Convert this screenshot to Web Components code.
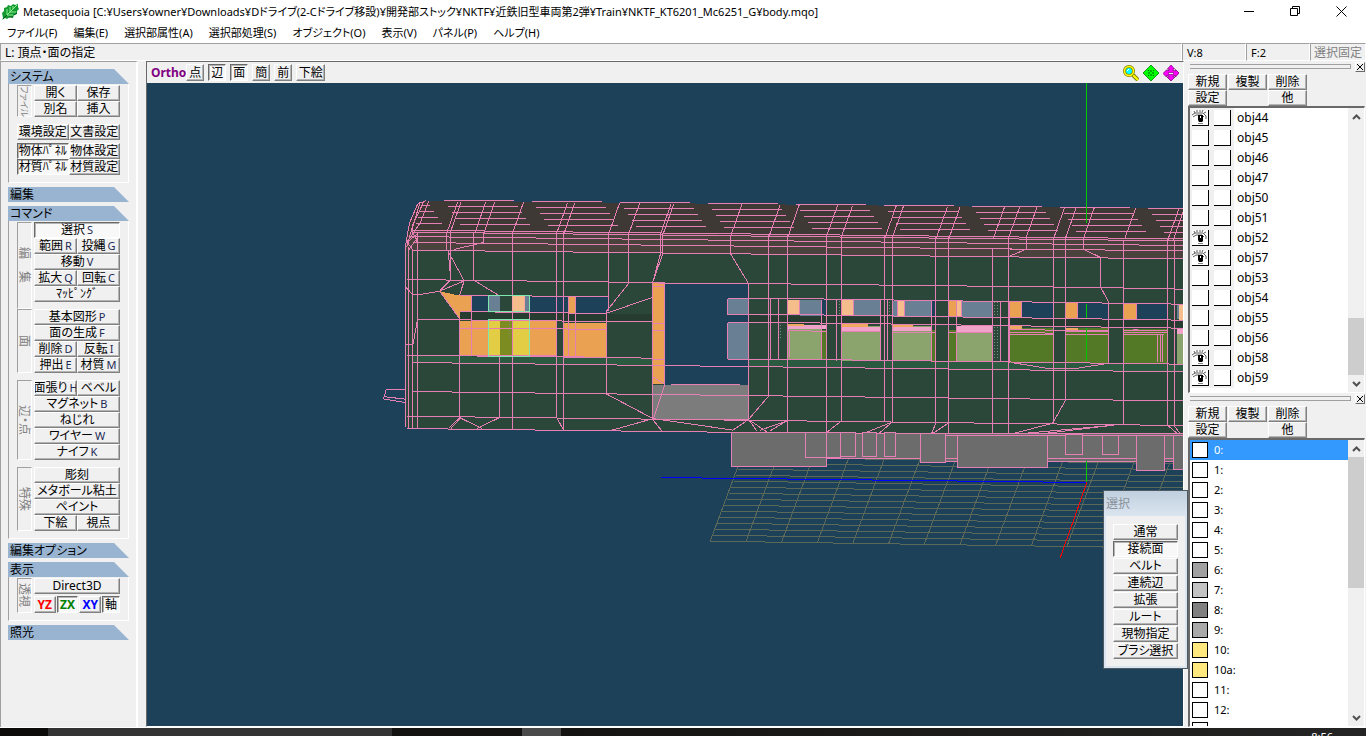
<!DOCTYPE html>
<html lang="ja">
<head>
<meta charset="utf-8">
<title>Metasequoia</title>
<style>
	html, body {
		margin: 0;
		height: 100%;
	}
	body {
		font: 12px/16px "Noto Sans", "Noto Sans CJK JP", sans-serif;
		color: #000;
		background: #f0f0f0;
		overflow: hidden;
	}
</style>
</head>
<body>
<meta-app></meta-app>

<script>
const base = `
	* { box-sizing: border-box; }
	button {
		font: inherit;
		color: inherit;
		margin: 0;
		padding: 0;
		border: 0;
		background: none;
		white-space: nowrap;
	}
`;

class MetaButton extends HTMLElement {
	connectedCallback() {
		this.attachShadow({ mode: "open" });
		this.shadowRoot.innerHTML = `
		<style>
			${base}
			:host {
				display: block;
				flex: 1 1 0;
				min-width: 0;
				height: 16px;
				font-feature-settings: "palt";
			}
			button {
				display: flex;
				align-items: center;
				justify-content: center;
				gap: 2px;
				width: 100%;
				height: 100%;
				line-height: 14px;
				overflow: hidden;
				background: #f0f0f0;
				border: 1px solid;
				border-color: #fff #808080 #808080 #fff;
				box-shadow: inset -1px -1px #b4b4b4;
			}
			:host([pressed]) button {
				background: #f8f8f8;
				border-color: #696969 #fff #fff #696969;
				box-shadow: inset 1px 1px #b4b4b4;
			}
			.key { font-size: 11px; color: #1c2a55; }
		</style>
		<button type="button" aria-pressed="${this.hasAttribute("pressed")}"><slot></slot>${this.hasAttribute("key") ? `<span class="key">${this.getAttribute("key")}</span>` : ""}</button>
		`;
	}
}

class TitleBar extends HTMLElement {
	connectedCallback() {
		this.attachShadow({ mode: "open" });
		this.shadowRoot.innerHTML = `
		<style>
			${base}
			:host {
				display: flex;
				align-items: center;
				height: 23px;
				padding-right: 2px;
				background: #fff;
				font-size: 11px;
				font-feature-settings: "palt";
			}
			.leaf { width: 18px; height: 18px; margin: 0 3px 0 2px; }
			h1 { flex: 1; margin: 0; font: inherit; white-space: nowrap; }
			button { width: 46px; height: 22px; display: grid; place-items: center; }
			button svg { width: 11px; height: 11px; fill: none; stroke: #000; }
		</style>
		<svg class="leaf" viewBox="0 0 18 18">
			<path d="M1 15 0 10l2-2V5l3-1 1-2 3 1 2-2 2 1 3-1v3l1 2-2 2v3l-3 1-1 3-3-1-3 2-2-1-3 2z" fill="#149a32"/>
			<path d="M1 16 15 2M5 12V6m3 3V4m3 2V3M5 12h6M8 9h6" stroke="#8cf08c" fill="none"/>
			<path d="M1 16 5 12M7 14l4 0M12 12l3-2" stroke="#06531a" fill="none"/>
		</svg>
		<h1><slot></slot></h1>
		<button type="button" aria-label="最小化"><svg viewBox="0 0 11 11"><path d="M0 5.5h10"/></svg></button>
		<button type="button" aria-label="元に戻す"><svg viewBox="0 0 11 11"><path d="M.5 2.5h7v7h-7zM2.500 2.500v-2h7v7h-2"/></svg></button>
		<button type="button" aria-label="閉じる"><svg viewBox="0 0 11 11"><path d="m.5.5 10 10m0-10-10 10"/></svg></button>
		`;
	}
}

class MenuBar extends HTMLElement {
	connectedCallback() {
		const items = ["ファイル(F)", "編集(E)", "選択部属性(A)", "選択部処理(S)", "オブジェクト(O)", "表示(V)", "パネル(P)", "ヘルプ(H)"];
		this.attachShadow({ mode: "open" });
		this.shadowRoot.innerHTML = `
		<style>
			${base}
			:host { display: block; height: 20px; background: #fff; font-size: 11px; font-feature-settings: "palt"; }
			nav { display: flex; gap: 16px; padding-left: 7px; }
			button { height: 20px; }
		</style>
		<nav>${items.map(i => `<button type="button">${i}</button>`).join("")}</nav>
		`;
	}
}

class StatusBar extends HTMLElement {
	connectedCallback() {
		this.attachShadow({ mode: "open" });
		this.shadowRoot.innerHTML = `
		<style>
			${base}
			:host { display: flex; height: 18px; line-height: 17px; background: #f0f0f0; }
			span { border: 1px solid; border-color: #a0a0a0 #fff #fff #a0a0a0; padding-left: 4px; width: 64px; font-size: 11px; white-space: nowrap; overflow: hidden; }
			.hint { flex: 1; font-size: 12px; font-feature-settings: "palt"; }
			.lock { width: 56px; padding-left: 3px; font-size: 12px; color: #808080; }
		</style>
		<span class="hint">L: 頂点・面の指定</span><span>V:8</span><span>F:2</span><span class="lock">選択固定</span>
		`;
	}
}

class ToolGroup extends HTMLElement {
	connectedCallback() {
		this.attachShadow({ mode: "open" });
		this.shadowRoot.innerHTML = `
		<style>
			${base}
			:host { display: block; }
			h2 {
				margin: 0;
				padding-left: 2px;
				height: 15px;
				font: inherit;
				line-height: 15px;
				font-feature-settings: "palt";
				background: #99b4d1;
				clip-path: polygon(0 0, calc(100% - 15px) 0, 100% 100%, 0 100%);
			}
			.body {
				display: flex;
				flex-direction: column;
				gap: 7px;
				padding: 1px 8px 7px;
				border: 1px solid;
				border-width: 0 1px 1px;
				border-color: #a0a0a0 #fff #fff #a0a0a0;
			}
			:host([closed]) .body { display: none; }
		</style>
		<h2>${this.getAttribute("heading")}</h2>
		<div class="body"><slot></slot></div>
		`;
	}
}

class ToolSection extends HTMLElement {
	connectedCallback() {
		const side = this.getAttribute("side");
		this.attachShadow({ mode: "open" });
		this.shadowRoot.innerHTML = `
		<style>
			${base}
			:host { display: flex; gap: 2px; }
			.side {
				contain: size;
				width: 15px;
				border: 1px solid;
				border-color: #a0a0a0 #fff #fff #a0a0a0;
				writing-mode: vertical-rl;
				text-orientation: sideways;
				text-align: center;
				line-height: 13px;
				white-space: nowrap;
				color: #808080;
				font-feature-settings: "palt";
			}
			:host([small]) .side { font-size: 9px; }
			.rows { flex: 1; min-width: 0; }
		</style>
		${side ? `<div class="side">${side}</div>` : ""}
		<div class="rows"><slot></slot></div>
		`;
	}
}

class ToolRow extends HTMLElement {
	connectedCallback() {
		this.attachShadow({ mode: "open" });
		this.shadowRoot.innerHTML = `<style>:host { display: flex; }</style><slot></slot>`;
	}
}

class ToolPanel extends HTMLElement {
	connectedCallback() {
		this.attachShadow({ mode: "open" });
		this.shadowRoot.innerHTML = `
		<style>
			${base}
			:host {
				display: flex;
				flex-direction: column;
				gap: 4px;
				padding: 7px 7px 0;
				border-top: 1px solid #a0a0a0;
				border-left: 1px solid #a0a0a0;
				border-right: 2px solid #fff;
				overflow: hidden;
			}
			.close-up { margin-top: -4px; }
			.edit { height: 87px; margin-bottom: -7px; }
			.axis { gap: 1px; margin-top: 2px; font-weight: 700; }
			.axis meta-button { height: 17px; }
			.yz { color: #f00; } .zx { color: #008000; } .xy { color: #00f; }
			.ax { font-weight: 400; flex: 0 0 18px; }
		</style>
		<tool-group heading="システム">
			<tool-section side="ファイル" small>
				<tool-row><meta-button>開く</meta-button><meta-button>保存</meta-button></tool-row>
				<tool-row><meta-button>別名</meta-button><meta-button>挿入</meta-button></tool-row>
			</tool-section>
			<tool-section>
				<tool-row><meta-button>環境設定</meta-button><meta-button>文書設定</meta-button></tool-row>
			</tool-section>
			<tool-section class="close-up">
				<tool-row><meta-button pressed>物体ﾊﾟﾈﾙ</meta-button><meta-button>物体設定</meta-button></tool-row>
				<tool-row><meta-button pressed>材質ﾊﾟﾈﾙ</meta-button><meta-button>材質設定</meta-button></tool-row>
			</tool-section>
		</tool-group>
		<tool-group heading="編集" closed></tool-group>
		<tool-group heading="コマンド">
			<tool-section side="編　集" class="edit">
				<tool-row><meta-button pressed key="S">選択</meta-button></tool-row>
				<tool-row><meta-button key="R">範囲</meta-button><meta-button key="G">投縄</meta-button></tool-row>
				<tool-row><meta-button key="V">移動</meta-button></tool-row>
				<tool-row><meta-button key="Q">拡大</meta-button><meta-button key="C">回転</meta-button></tool-row>
				<tool-row><meta-button>ﾏｯﾋﾟﾝｸﾞ</meta-button></tool-row>
			</tool-section>
			<tool-section side="面">
				<tool-row><meta-button key="P">基本図形</meta-button></tool-row>
				<tool-row><meta-button key="F">面の生成</meta-button></tool-row>
				<tool-row><meta-button key="D">削除</meta-button><meta-button key="I">反転</meta-button></tool-row>
				<tool-row><meta-button key="E">押出</meta-button><meta-button key="M">材質</meta-button></tool-row>
			</tool-section>
			<tool-section side="辺・点">
				<tool-row><meta-button key="H">面張り</meta-button><meta-button>ベベル</meta-button></tool-row>
				<tool-row><meta-button key="B">マグネット</meta-button></tool-row>
				<tool-row><meta-button>ねじれ</meta-button></tool-row>
				<tool-row><meta-button key="W">ワイヤー</meta-button></tool-row>
				<tool-row><meta-button key="K">ナイフ</meta-button></tool-row>
			</tool-section>
			<tool-section side="特殊">
				<tool-row><meta-button>彫刻</meta-button></tool-row>
				<tool-row><meta-button>メタボール粘土</meta-button></tool-row>
				<tool-row><meta-button>ペイント</meta-button></tool-row>
				<tool-row><meta-button>下絵</meta-button><meta-button>視点</meta-button></tool-row>
			</tool-section>
		</tool-group>
		<tool-group heading="編集オプション" closed></tool-group>
		<tool-group heading="表示">
			<tool-section side="透視">
				<tool-row><meta-button>Direct3D</meta-button></tool-row>
				<tool-row class="axis"><meta-button class="yz">YZ</meta-button><meta-button class="zx" pressed>ZX</meta-button><meta-button class="xy">XY</meta-button><meta-button class="ax" pressed>軸</meta-button></tool-row>
			</tool-section>
		</tool-group>
		<tool-group heading="照光" closed></tool-group>
		`;
	}
}

class ModelView extends HTMLElement {
	constructor() {
		super();
		this.attachShadow({ mode: "open" });
		this.shadowRoot.innerHTML = `
		<style>
			:host { display: block; background: #1d4159; overflow: hidden; min-height: 0; }
			svg { display: block; width: 100%; height: 100%; shape-rendering: crispEdges; }
			path { vector-effect: non-scaling-stroke; stroke-width: 1px; }
			.w { fill: none; stroke: #e67fb4; }
			.grid { fill: none; stroke: #5c6858; }
			.bg { fill: #1d4159; } .or { fill: #eba152; } .pe { fill: #f5bd8b; }
			.sl { fill: #697f93; } .lt { fill: #8ba46e; } .dk { fill: #537926; }
			.un { fill: #6c6c6c; stroke: #e67fb4; }
		</style>
		${this.render()}
		`;
	}

	/* model units are a third of a pixel */
	render() {
		const line = (x1, y1, x2, y2) => `M${x1} ${y1}L${x2} ${y2}`;
		const rects = (cls, list) => `<path class="${cls}" d="${list.map(([x, y, w, h]) => `M${x} ${y}h${w}v${h}h${-w}z`).join("")}"/>`;

		let grid = "";
		for (let i = 0; i < 15; i++) grid += line(990 + i * 7, 1083 - i * 18, 2340 + i * 7, 1103 - i * 18);
		for (let i = 0; i < 14; i++) grid += line(990 + i * 107, 1083 + i * 1.6, 1084 + i * 107, 830 + i * 1.6);

		let slats = "M124 76H150M118 94H162M112 112H174M106 130H186";
		for (let g = 0; g < 9; g++) {
			for (let r = 0; r < 5; r++) {
				const x = 192 + g * 264 + r * 12;
				const y = 61 + g * 3 + r * 18;
				slats += `M${x} ${y}H${Math.min(x + 208, 2412)}`;
			}
		}

		const ribs = [233, 243, 317, 344, 430, 562, 584, 718, 778, 873, 881, 1085, 1200, 1257, 1372, 1417, 1548, 1570, 1702, 1740, 1873, 1918, 1970, 2053, 2088, 2142, 2266, 2396, 2412];
		const ribLines = ribs.map(x => line(x, 62 + x / 100, x - 33, 155 + x / 100)).join("");

		const rails = [[95, 150, 176], [95, 156, 182], [85, 169, 196], [97, 187, 212], [97, 210, 236], [97, 547, 575], [97, 634, 662], [80, 708, 736], [80, 745, 772]];
		const railLines = rails.map(r => line(r[0], r[1], 2412, r[2])).join("");

		const posts = [
			[76, 196, 740], [85, 200, 745], [97, 208, 745], [112, 155, 745], [200, 155, 212], [210, 155, 300], [281, 155, 300], [310, 155, 187],
			[398, 155, 747], [530, 155, 712], [550, 155, 750], [686, 160, 392], [745, 162, 310], [841, 162, 220], [848, 162, 220],
			[1052, 164, 222], [1105, 310, 718], [1165, 164, 648], [1171, 355, 538], [1195, 355, 538], [1222, 164, 756], [1340, 165, 756], [1384, 165, 722],
			[1369, 358, 542], [1501, 358, 542], [1514, 168, 725], [1522, 360, 543], [1537, 168, 725], [1655, 362, 543], [1667, 168, 728], [1705, 168, 762],
			[1837, 205, 765], [1861, 364, 546], [1885, 170, 765], [1938, 172, 207], [2021, 172, 660], [2056, 172, 660], [2109, 175, 207], [2162, 232, 322],
			[2185, 366, 550], [2230, 178, 733], [2362, 178, 735], [2383, 178, 740]
		].map(p => `M${p[0]} ${p[1]}V${p[2]}`).join("");

		return `
		<svg viewBox="147 83 1036 643" preserveAspectRatio="xMidYMid slice" role="img" aria-label="body.mqo">
		<g transform="translate(380.2 180.2) scale(.33333)">
			<path class="grid" d="${grid}"/>
			<path d="M843 892 2120 907" stroke="#00f"/>
			<path d="M130 61 2412 86V240H75V196L88 128 112 72z" fill="#3e3935"/>
			<path d="M90 153 2412 178V240H75V196z" fill="#4a423d"/>
			<path d="M75 209H97L2412 236V771L500 750 90 745 75 738z" fill="#2b4739"/>
			<path d="M97 527 2412 552V575L97 547z" fill="#2b5a40"/>
			<path d="M238 396 2412 420V442L238 420z" fill="#263c30"/>
			<path class="w" d="M75 628H18L10 656 75 667M10 649 75 657"/>
			${rects("bg", [[274, 347, 51, 47], [449, 349, 236, 48], [854, 310, 251, 303], [1325, 359, 15, 47], [1655, 363, 12, 47], [1925, 365, 96, 48], [2093, 368, 92, 47], [2270, 370, 92, 47]])}
			<path class="or" d="M178 333 232 345 274 347V394H238V415z"/>
			${rects("or", [[565, 350, 22, 47], [238, 421, 291, 106], [550, 428, 130, 104], [816, 308, 38, 304], [1705, 362, 24, 48], [1888, 364, 37, 48], [2056, 367, 37, 47], [2230, 368, 40, 47]])}
			${rects("sl", [[325, 347, 33, 47], [434, 347, 15, 47], [1042, 355, 63, 48], [1042, 427, 63, 109], [1258, 359, 67, 47], [1421, 359, 80, 47], [1537, 362, 118, 47], [1745, 363, 92, 48], [2389, 370, 8, 47]])}
			${rects("pe", [[397, 347, 37, 47], [1222, 358, 36, 47], [1384, 359, 37, 47], [1552, 363, 21, 47], [1729, 363, 16, 47], [2397, 371, 14, 47]])}
			${rects("lt", [[1222, 436, 103, 102], [1384, 436, 117, 105], [1537, 438, 118, 105], [1729, 438, 108, 106], [2389, 444, 23, 108]])}
			${rects("dk", [[1325, 448, 15, 92], [1655, 448, 12, 95], [1705, 448, 24, 96], [1888, 442, 133, 105], [2056, 444, 129, 105], [2230, 446, 132, 104]])}
			<path d="M325 420h124v107H325z" fill="#e3cd45"/>
			<path d="M358 420h40v107H358z" fill="#7d8c20"/>
			<path d="M818 613h287v105H818z" fill="#7c7c7c"/>
			<path d="M1222 434h118v12l-118 2zM1384 440h117v12h-117zM1537 440h118v13h-118zM1729 438h108v16h-108zM2389 446h23v14h-23z" fill="#f0a3c9"/>
			<path d="M1384 432h78v8h-78zM1537 434h60v6h-60zM1888 438h38v7h-38zM2056 442h38v6h-38zM1222 432h50v5h-50z" fill="#efa95f"/>
			<path class="w" d="${slats}${ribLines}${railLines}${posts}"/>
			<path class="w" d="M138 61 112 72 88 128 76 196M130 66 98 134 80 200M146 62 120 128 98 160 80 185 97 208M120 64 95 150 112 187M76 190 112 160M85 210 112 172"/>
			<path class="w" d="M80 298 816 307 854 310H1105L2162 322 2412 327M97 343H120L178 333 252 302 238 345M178 333 210 300M203 212 252 302M204 212 212 300M281 300 358 347M310 187 220 208M76 320 97 343"/>
			<path class="w" d="M238 345 686 350M238 394 680 400M178 333 238 415V712M112 418 238 419 686 424H816M112 418 98 495M76 493H97M80 526 530 529 816 534M238 445 530 446 680 448M550 424V532H680V392L745 310M682 398 816 352M274 347V527M449 349V527M358 527V712M680 532V642L818 715"/>
			<path class="w" d="M565 350H587V532M565 350V532M238 527H530M550 532H680"/>
			<path class="w" d="M841 220 818 305M848 220 820 300M816 308H854V612L818 590M816 308V718H1105M816 320H854M816 430H854M816 451H854M816 538H854M854 612 820 715M873 613H1080M1052 222 1105 310"/>
			<path class="w" d="M238 712 205 745M242 712 212 745M238 712 305 745M358 712 290 745M530 712 550 750M816 716 695 750M816 716 845 752M818 715 1060 750M1105 718 1055 752M1105 718 1165 648M1105 718 1130 752M1105 718 1160 755M1220 722 1140 750M1220 722 1170 752M1384 722 1340 756M1537 725 1460 756M1537 725 1498 758M1705 728 1655 762M1667 728 1655 758M2056 660 2018 728M2200 735 1905 762M2200 735 1950 765M2021 728 1900 760M2362 735 2400 768M2383 738 2405 768M2021 660V728"/>
			<path class="w" d="M1042 355H1235L2412 372M1042 403H1235L2412 420M1042 427H1222L2412 444M1042 537H1222L2412 552M1042 355V403M1042 427V537M1888 207 1938 207 2109 207 2162 232M1938 207 1888 228M2162 322 2185 365M1900 548 2010 566H2080L2180 550"/>
			<path class="w" d="M1222 450 1340 454M1228 450V530M1384 453H1501M1537 456H1667M1705 458H1837M1888 448 2185 452M1888 456 2021 459M1888 463H2021M2056 455H2185M2056 462H2185M2230 450H2360M2230 458H2362M2230 464H2350M2332 460V545M2340 460V545M2348 460V545M2258 449 2360 452M1258 358V405M1325 358V538M1421 358V405M1501 358V541M1552 362V410M1573 362V410M1729 362V544M1745 362V411M1888 364V547M1925 365V412M2056 367V549M2093 367V414M2230 369V550M2270 370V417"/>
			<path d="M325 347h124v47H325zM325 419h124v109H325z" fill="none" stroke="#7fe6b0"/>
			<path d="M397 347V394M434 347V394" stroke="#f5a7a6"/>
			<path d="M388 422V475M1202 435V475M1377 362V405M1527 365V405M1843 366V408M1853 366V408M1843 440V540M1853 440V540" stroke="#74917e" stroke-dasharray="1 2"/>
			${rects("un", [[1276, 760, 1136, 76], [1697, 765, 715, 78]])}
			<path d="M1280 768H2412V834H1280z" fill="#6c6c6c"/>
			${rects("un", [[1055, 756, 285, 104], [1276, 758, 105, 74], [1381, 757, 45, 72], [1447, 757, 43, 72], [1513, 757, 34, 72], [1622, 760, 75, 87], [1732, 765, 271, 97], [2056, 763, 52, 60], [2167, 766, 49, 57], [2270, 767, 84, 104], [2380, 767, 32, 101]])}
			<path d="M2120 -292V128M2120 370V413M2120 443V543M2120 843V907" stroke="#00c800"/>
			<path d="M2120 907 2040 1133" stroke="#f00"/>
		</g>
		</svg>`;
	}
}

class ViewPane extends HTMLElement {
	connectedCallback() {
		this.attachShadow({ mode: "open" });
		this.shadowRoot.innerHTML = `
		<style>
			${base}
			:host {
				display: grid;
				grid-template-rows: 21px 1fr;
				position: relative;
				min-width: 0;
				border: 1px solid;
				border-color: #696969 #fff #fff #696969;
			}
			.bar { display: flex; align-items: center; padding: 0 4px; background: #f0f0f0; }
			.bar b { color: #800080; }
			.bar meta-button { flex: 0 0 18px; height: 17px; margin-right: 4px; }
			.bar meta-button.wide { flex-basis: 29px; }
			.bar .spring { flex: 1; }
			.bar .nav { width: 16px; height: 16px; margin-left: 4px; }
			.nav svg { display: block; width: 16px; height: 16px; }
			select-dialog { position: absolute; right: -5px; bottom: 57px; z-index: 1; }
		</style>
		<div class="bar">
			<b>Ortho</b>
			<meta-button>点</meta-button><meta-button pressed>辺</meta-button><meta-button pressed>面</meta-button><meta-button>簡</meta-button><meta-button>前</meta-button><meta-button class="wide">下絵</meta-button>
			<span class="spring"></span>
			<button class="nav" type="button" aria-label="拡大縮小"><svg viewBox="0 0 16 16"><path d="m10 10 5 5" stroke="#808000" stroke-width="4"/><path d="m10 10 5 5" stroke="#ff0" stroke-width="2"/><circle cx="6" cy="6" r="4.500" fill="#0ff" stroke="#808000" stroke-width="3"/><circle cx="6" cy="6" r="4.500" fill="none" stroke="#ff0" stroke-width="1.500"/><path d="M4 6 6 4" stroke="#fff"/></svg></button>
			<button class="nav" type="button" aria-label="移動"><svg viewBox="0 0 16 16"><path d="M8 0 16 8 8 16 0 8z" fill="#0f0" stroke="#008000" stroke-width=".8"/><path d="M8 5v2M8 9v2M5 8h2M9 8h2M5 5.500h1M10 5.500h1M5 10.500h1M10 10.500h1" stroke="#006000"/></svg></button>
			<button class="nav" type="button" aria-label="回転"><svg viewBox="0 0 16 16"><path d="m8 0 3.500 4H10v1.500l2.500.5V4.500L16 8l-3.500 4v-1.500L10 11v1h2l-4 4-4-4h2v-1l-2.500-.5V12L0 8.500 3.500 5l2.500.5V4H4.500z" fill="#f0f" stroke="#800080" stroke-width=".8"/><path d="M5.500 7.500h5v2h-5z" fill="#f0f0f0" stroke="#800080" stroke-width=".7"/></svg></button>
		</div>
		<model-view></model-view>
		<select-dialog></select-dialog>
		`;
	}
}

class SelectDialog extends HTMLElement {
	connectedCallback() {
		const modes = ["通常", "接続面", "ベルト", "連続辺", "拡張", "ルート", "現物指定", "ブラシ選択"];
		this.attachShadow({ mode: "open" });
		this.shadowRoot.innerHTML = `
		<style>
			${base}
			:host {
				display: block;
				width: 85px;
				border: 1px solid #4f5a63;
				background: #f0f0f0;
				box-shadow: inset 0 0 0 2px #dbe5f0;
			}
			h2 { margin: 0; height: 25px; padding-left: 2px; font: inherit; line-height: 26px; color: #8a929b; background: linear-gradient(#c0cfde, #dbe5f0); }
			.modes { display: grid; gap: 1px; padding: 8px 9px 9px; }
		</style>
		<h2>選択</h2>
		<div class="modes">${modes.map((m, i) => `<meta-button${i === 1 ? " pressed" : ""}>${m}</meta-button>`).join("")}</div>
		`;
	}
}

class DockPanel extends HTMLElement {
	connectedCallback() {
		this.attachShadow({ mode: "open" });
		const top = Number(this.getAttribute("thumb-top"));
		const size = Number(this.getAttribute("thumb-size"));
		this.shadowRoot.innerHTML = `
		<style>
			${base}
			:host { display: grid; grid-template-rows: 11px 34px 1fr; min-height: 0; }
			.grip { display: flex; align-items: center; gap: 4px; padding: 0 1px 0 2px; }
			.grip i { flex: 1; height: 5px; border: 1px solid #a0a0a0; border-width: 1px 1px 1px 0; }
			.close { width: 10px; height: 10px; border: 1px solid; border-color: #fff #696969 #696969 #fff; display: grid; place-items: center; }
			.close svg { display: block; width: 6px; height: 6px; stroke: #000; fill: none; }
			.tools { display: grid; grid-template-columns: repeat(3, 39px); gap: 0 1px; align-content: start; padding-top: 2px; }
			.other { grid-column: 3; }
			.box { display: flex; border: 1px solid; border-color: #696969 #fff #fff #696969; border-width: 2px 1px 1px 2px; min-height: 0; background: #fff; margin-right: 1px; }
			.list { flex: 1; min-height: 0; overflow: hidden; }
			.scroll { display: grid; grid-template-rows: 17px 1fr 17px; width: 16px; background: #f0f0f0; }
			.scroll svg { width: 9px; height: 6px; margin: auto; fill: none; stroke: #505050; stroke-width: 2; }
			.track { display: grid; grid-template-rows: ${top}fr ${size}fr ${100 - top - size}fr; }
			.thumb { grid-row: 2; background: #cdcdcd; }
		</style>
		<div class="grip"><i></i><button class="close" type="button" aria-label="閉じる"><svg viewBox="0 0 6 6"><path d="m0 0 6 6m0-6-6 6"/></svg></button></div>
		<div class="tools">
			<meta-button>新規</meta-button><meta-button>複製</meta-button><meta-button>削除</meta-button>
			<meta-button>設定</meta-button><meta-button class="other">他</meta-button>
		</div>
		<div class="box">
			<div class="list"><slot></slot></div>
			<div class="scroll"><svg viewBox="0 0 9 6"><path d="m1 5 3.500-3.500L8 5"/></svg><div class="track"><div class="thumb"></div></div><svg viewBox="0 0 9 6"><path d="m1 1 3.500 3.500L8 1"/></svg></div>
		</div>
		`;
	}
}

class ObjectRow extends HTMLElement {
	connectedCallback() {
		const name = this.getAttribute("name");
		const shown = this.hasAttribute("shown");
		this.attachShadow({ mode: "open" });
		this.shadowRoot.innerHTML = `
		<style>
			${base}
			:host { display: flex; height: 20px; line-height: 20px; }
			.cells { display: flex; gap: 5px; padding: 2px 3px 2px 2px; background: #f0f0f0; margin-right: 3px; width: 44px; }
			label { display: grid; }
			input { appearance: none; grid-area: 1 / 1; margin: 0; width: 17px; height: 16px; background: #fff; border: solid #000; border-width: 0 1px 1px 0; }
			svg { grid-area: 1 / 1; width: 15px; height: 15px; pointer-events: none; }
		</style>
		<div class="cells">
			<label><input type="checkbox" aria-label="${name} 表示"${shown ? " checked" : ""}>${shown ? `<svg viewBox="0 0 15 15"><path d="M0 5 3 3h8l3 3v3M2 1l1 2M5 0v2M8 0v2M11 0l-1 2M14 2l-2 1M1 7l3-2h6l2 2" fill="none" stroke="#333" stroke-width=".8"/><path d="M6 5h5v6l-1 1H7L6 10z"/><path d="M8 6h1v2H8z" fill="#fff"/><path d="M6 13.500h5" stroke="#888"/></svg>` : ""}</label>
			<label><input type="checkbox" aria-label="${name} ロック"></label>
		</div>
		<span>${name}</span>
		`;
	}
}

class MaterialRow extends HTMLElement {
	connectedCallback() {
		this.attachShadow({ mode: "open" });
		this.shadowRoot.innerHTML = `
		<style>
			${base}
			:host { display: flex; align-items: center; gap: 6px; height: 20px; padding-left: 2px; line-height: 20px; font-size: 11px; }
			:host([selected]) { background: #39f; color: #fff; }
			i { width: 16px; height: 16px; border: 1px solid #000; background: ${this.getAttribute("color") || "#fff"}; }
		</style>
		<i></i><span>${this.getAttribute("name")}:</span>
		`;
	}
}

class MetaApp extends HTMLElement {
	connectedCallback() {
		const objects = [44, 45, 46, 47, 50, 51, 52, 57, 53, 54, 55, 56, 58, 59];
		const visible = [44, 52, 57, 58, 59];
		const colors = { 6: "#a0a0a0", 7: "#c3c3c3", 8: "#808080", 9: "#a9a9a9", 10: "#ffe97f", "10a": "#ffe97f" };
		const materials = ["0", "1", "2", "3", "4", "5", "6", "7", "8", "9", "10", "10a", "11", "12", ""];
		this.attachShadow({ mode: "open" });
		this.shadowRoot.innerHTML = `
		<style>
			${base}
			:host { display: grid; grid-template-rows: auto auto auto 1fr 8px; height: 100vh; overflow: hidden; }
			main { display: grid; grid-template-columns: 138px 1fr 178px; min-height: 0; border-bottom: 1px solid #fff; }
			view-pane { margin: 0 4px 0 8px; }
			.docks { display: grid; grid-template-rows: 332fr 334fr; min-height: 0; }
			footer { display: flex; justify-content: flex-end; padding: 1px 33px 0 0; overflow: hidden; font-size: 11px; color: #fff; background: linear-gradient(90deg, #0d0b0a 48px, #333 48px 392px, #141210 392px 522px, #4a4a4a 522px 561px, #151311 561px, #242424); }
		</style>
		<title-bar>Metasequoia [C:¥Users¥owner¥Downloads¥Dドライブ(2-Cドライブ移設)¥開発部ストック¥NKTF¥近鉄旧型車両第2弾¥Train¥NKTF_KT6201_Mc6251_G¥body.mqo]</title-bar>
		<menu-bar></menu-bar>
		<status-bar></status-bar>
		<main>
			<tool-panel></tool-panel>
			<view-pane></view-pane>
			<div class="docks">
				<dock-panel thumb-top="77" thumb-size="23">${objects.map(n => `<object-row name="obj${n}"${visible.includes(n) ? " shown" : ""}></object-row>`).join("")}</dock-panel>
				<dock-panel thumb-top="0" thumb-size="52">${materials.map((n, i) => `<material-row name="${n}"${colors[n] ? ` color="${colors[n]}"` : ""}${i === 0 ? " selected" : ""}></material-row>`).join("")}</dock-panel>
			</div>
		</main>
		<footer><time>8:56</time></footer>
		`;
	}
}

customElements.define("meta-button", MetaButton);
customElements.define("title-bar", TitleBar);
customElements.define("menu-bar", MenuBar);
customElements.define("status-bar", StatusBar);
customElements.define("tool-group", ToolGroup);
customElements.define("tool-section", ToolSection);
customElements.define("tool-row", ToolRow);
customElements.define("tool-panel", ToolPanel);
customElements.define("model-view", ModelView);
customElements.define("select-dialog", SelectDialog);
customElements.define("view-pane", ViewPane);
customElements.define("dock-panel", DockPanel);
customElements.define("object-row", ObjectRow);
customElements.define("material-row", MaterialRow);
customElements.define("meta-app", MetaApp);
</script>
</body>
</html>
